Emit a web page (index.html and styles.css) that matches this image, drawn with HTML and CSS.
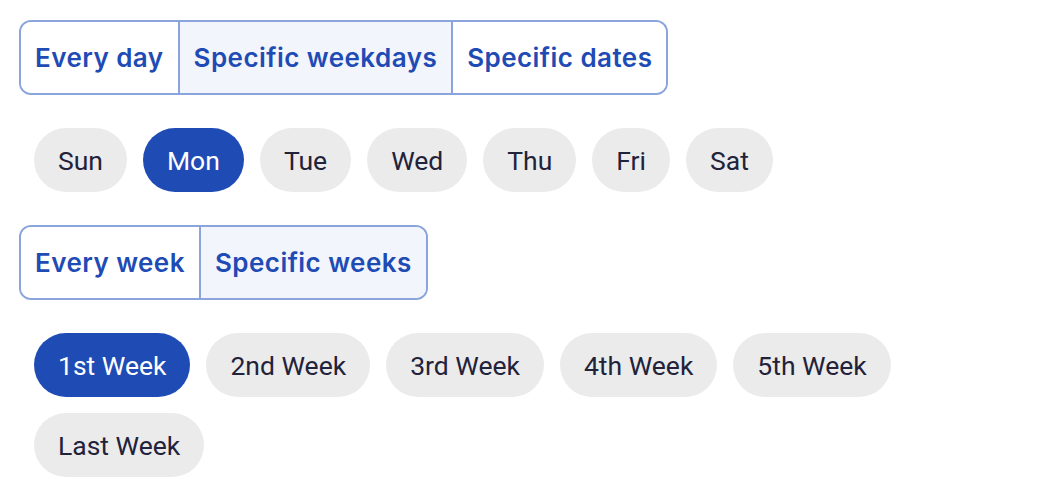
FILE: index.html
```html
<!DOCTYPE html>
<html>
<head>
<meta charset="utf-8">
<link rel="stylesheet" href="styles.css">
</head>
<body>
<div class="page">
  <div class="segmented">
    <div class="seg">Every day</div>
    <div class="seg active">Specific weekdays</div>
    <div class="seg">Specific dates</div>
  </div>
  <div class="chips">
    <div class="chip">Sun</div>
    <div class="chip selected">Mon</div>
    <div class="chip">Tue</div>
    <div class="chip">Wed</div>
    <div class="chip">Thu</div>
    <div class="chip">Fri</div>
    <div class="chip">Sat</div>
  </div>
  <div class="segmented">
    <div class="seg">Every week</div>
    <div class="seg active">Specific weeks</div>
  </div>
  <div class="chips">
    <div class="chip selected">1st Week</div>
    <div class="chip">2nd Week</div>
    <div class="chip">3rd Week</div>
    <div class="chip">4th Week</div>
    <div class="chip">5th Week</div>
    <div class="chip">Last Week</div>
  </div>
</div>
</body>
</html>
```
FILE: styles.css
```css
html, body {
  margin: 0;
  padding: 0;
  background: #ffffff;
}
.page {
  padding: 20px 19px;
  display: flex;
  flex-direction: column;
  align-items: flex-start;
  gap: 33px;
}
.segmented {
  display: flex;
  border: 2px solid #8ba5dc;
  border-radius: 12px;
  overflow: hidden;
  height: 75px;
  box-sizing: border-box;
}
.seg {
  display: flex;
  align-items: center;
  padding: 0 14px;
  font-family: Inter, "Noto Sans", sans-serif;
  font-weight: 600;
  font-size: 26px;
  color: #1f4bb5;
  letter-spacing: 0.45px;
  background: #ffffff;
}
.seg + .seg {
  border-left: 2px solid #8ba5dc;
}
.seg.active {
  background: #f2f5fb;
}
.chips {
  display: flex;
  flex-wrap: wrap;
  gap: 16px 16px;
  padding-left: 15px;
}
.chip {
  height: 64px;
  padding: 0 24px;
  border-radius: 32px;
  background: #ebebeb;
  color: #22223a;
  font-family: Roboto, "Liberation Sans", sans-serif;
  font-size: 26.5px;
  display: flex;
  align-items: center;
}
.chip.selected {
  background: #1f4bb5;
  color: #ffffff;
}
```
